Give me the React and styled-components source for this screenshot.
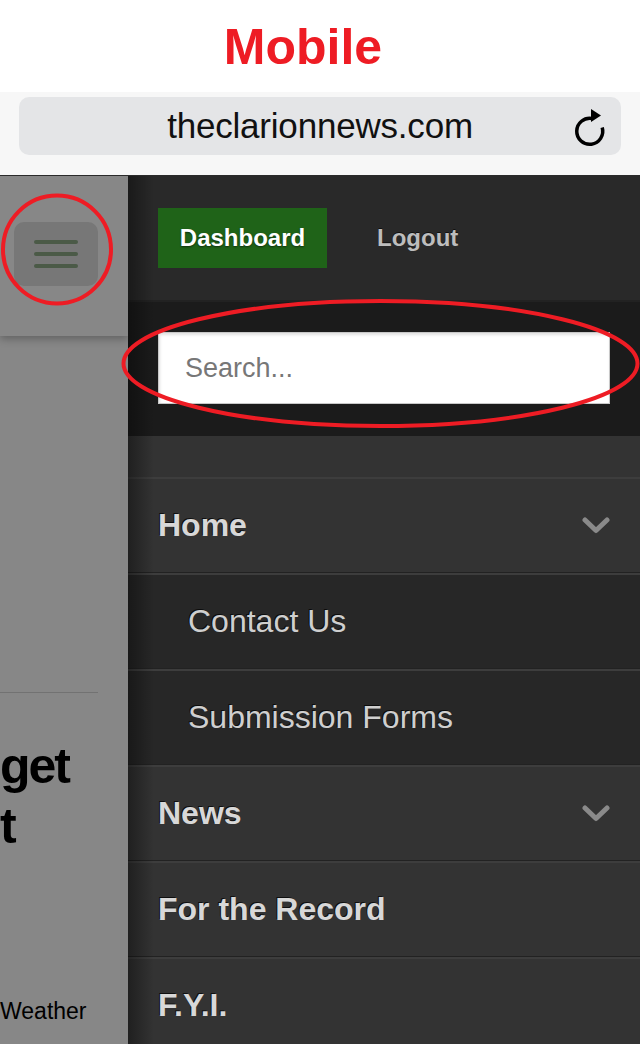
import styled, { createGlobalStyle } from "styled-components";

const GlobalStyle = createGlobalStyle`
  * {
    box-sizing: border-box;
  }
  body {
    margin: 0;
    background: #ffffff;
    font-family: "Liberation Sans", Arial, sans-serif;
  }
`;

const Page = styled.div`
  position: relative;
  width: 640px;
  height: 1044px;
  overflow: hidden;
  display: flex;
  flex-direction: column;
`;

const TitleBar = styled.div`
  height: 92px;
  display: flex;
  align-items: center;
  justify-content: center;
  padding: 2px 34px 0 0;
  color: #ee1c24;
  font-weight: bold;
  font-size: 50px;
`;

const BrowserBar = styled.div`
  height: 84px;
  background: #f7f7f7;
  padding: 5px 19px 0;
  border-bottom: 1px solid #2a2a2a;
`;

const UrlPill = styled.div`
  height: 58px;
  border-radius: 10px;
  background: #e4e5e7;
  display: grid;
  grid-template-columns: 1fr auto 1fr;
  align-items: center;
`;

const UrlText = styled.span`
  grid-column: 2;
  font-size: 35px;
  color: #111;
  letter-spacing: -0.2px;
`;

const Reload = styled.svg`
  grid-column: 3;
  justify-self: end;
  margin: 4px 15px 0 0;
`;

const Viewport = styled.div`
  flex: 1;
  display: flex;
  min-height: 0;
`;

const SitePane = styled.div`
  width: 128px;
  flex-shrink: 0;
  background: #878787;
  display: flex;
  flex-direction: column;
  overflow: hidden;
`;

const SiteHeader = styled.div`
  height: 160px;
  padding: 46px 0 0 14px;
  background: #878787;
  box-shadow: 0 3px 8px rgba(0, 0, 0, 0.28);
  position: relative;
  z-index: 1;
`;

const MenuButton = styled.div`
  width: 84px;
  height: 64px;
  border-radius: 10px;
  background: #777777;
  display: flex;
  flex-direction: column;
  align-items: center;
  justify-content: center;
  gap: 8px;
`;

const MenuBar = styled.span`
  width: 44px;
  height: 4px;
  border-radius: 2px;
  background: #4b5a47;
`;

const SiteBody = styled.div`
  padding-top: 356px;
`;

const Rule = styled.div`
  width: 98px;
  height: 1px;
  background: #727272;
`;

const Headline = styled.h2`
  margin: 43px 0 0;
  font-size: 50px;
  line-height: 60px;
  font-weight: bold;
  letter-spacing: -2px;
  color: #000;
  white-space: nowrap;
`;

const Caption = styled.div`
  margin-top: 142px;
  font-size: 23px;
  line-height: 26px;
  color: #000;
`;

const Drawer = styled.nav`
  flex: 1;
  position: relative;
  background: #333333;
  overflow: hidden;
  &::after {
    content: "";
    position: absolute;
    left: 0;
    top: 0;
    bottom: 0;
    width: 26px;
    background: linear-gradient(to right, rgba(0, 0, 0, 0.38), rgba(0, 0, 0, 0));
    pointer-events: none;
  }
`;

const DrawerTop = styled.div`
  height: 126px;
  background: #292929;
  border-bottom: 2px solid #222;
  display: flex;
  align-items: center;
  padding: 0 30px;
`;

const Dashboard = styled.button`
  width: 169px;
  height: 60px;
  border: none;
  background: #1f6318;
  color: #fff;
  font-family: inherit;
  font-weight: bold;
  font-size: 24px;
  text-shadow: 0 1px 2px rgba(0, 0, 0, 0.5);
`;

const Logout = styled.span`
  margin-left: 50px;
  color: #bdbdbd;
  font-weight: bold;
  font-size: 24px;
  text-shadow: 0 -1px 0 #111;
`;

const SearchArea = styled.div`
  height: 134px;
  background: #1b1b1b;
  padding: 30px 30px 0;
`;

const SearchInput = styled.input`
  display: block;
  width: 452px;
  height: 72px;
  border: 1px solid #c8c8c8;
  box-shadow: inset 1px 2px 3px rgba(0, 0, 0, 0.12);
  background: #fff;
  padding: 0 26px;
  font-family: inherit;
  font-size: 27px;
  outline: none;
  &::placeholder {
    color: #777;
  }
`;

const Spacer = styled.div`
  height: 41px;
  background: #333;
`;

const Row = styled.div`
  height: 96px;
  display: flex;
  align-items: center;
  justify-content: space-between;
  padding: 0 30px 0 ${(p) => (p.$sub ? "60px" : "30px")};
  background: ${(p) => (p.$sub ? "#272727" : "#333333")};
  border-top: 2px solid #3d3d3d;
  border-bottom: 1px solid #222;
  color: ${(p) => (p.$sub ? "#cfcfcf" : "#d8d8d8")};
  font-size: 32px;
  font-weight: ${(p) => (p.$sub ? "normal" : "bold")};
  text-shadow: -1px -1px 0 rgba(0, 0, 0, 0.7);
`;

const Marks = styled.svg`
  position: absolute;
  left: 0;
  top: 0;
  z-index: 5;
  pointer-events: none;
`;

const Chevron = () => (
  <svg width="28" height="18" viewBox="0 0 28 18">
    <polyline
      points="3,3 14,13.5 25,3"
      fill="none"
      stroke="#8a8a8a"
      strokeWidth="5"
      strokeLinejoin="round"
      strokeLinecap="round"
    />
  </svg>
);

const menu = [
  { label: "Home", drop: true },
  { label: "Contact Us", sub: true },
  { label: "Submission Forms", sub: true },
  { label: "News", drop: true },
  { label: "For the Record" },
  { label: "F.Y.I." },
];

export default function App() {
  return (
    <>
      <GlobalStyle />
      <Page>
        <TitleBar>Mobile</TitleBar>
        <BrowserBar>
          <UrlPill>
            <UrlText>theclarionnews.com</UrlText>
            <Reload width="32" height="42" viewBox="0 0 32 42">
              <path
                d="M 18 11.5 A 13 13 0 1 0 28.2 20.6"
                fill="none"
                stroke="#000"
                strokeWidth="3.5"
              />
              <polygon points="17,2 27,8.5 17,15" fill="#000" />
            </Reload>
          </UrlPill>
        </BrowserBar>
        <Viewport>
          <SitePane>
            <SiteHeader>
              <MenuButton>
                <MenuBar />
                <MenuBar />
                <MenuBar />
              </MenuButton>
            </SiteHeader>
            <SiteBody>
              <Rule />
              <Headline>
                get
                <br />t
              </Headline>
              <Caption>Weather</Caption>
            </SiteBody>
          </SitePane>
          <Drawer>
            <DrawerTop>
              <Dashboard>Dashboard</Dashboard>
              <Logout>Logout</Logout>
            </DrawerTop>
            <SearchArea>
              <SearchInput placeholder="Search..." />
            </SearchArea>
            <Spacer />
            {menu.map((item) => (
              <Row key={item.label} $sub={item.sub}>
                <span>{item.label}</span>
                {item.drop && <Chevron />}
              </Row>
            ))}
          </Drawer>
        </Viewport>
        <Marks width="640" height="1044" viewBox="0 0 640 1044">
          <circle cx="57" cy="249.5" r="54" fill="none" stroke="#ee1c24" strokeWidth="4" />
          <ellipse cx="380.5" cy="363.5" rx="257" ry="62.5" fill="none" stroke="#ee1c24" strokeWidth="4" />
        </Marks>
      </Page>
    </>
  );
}
